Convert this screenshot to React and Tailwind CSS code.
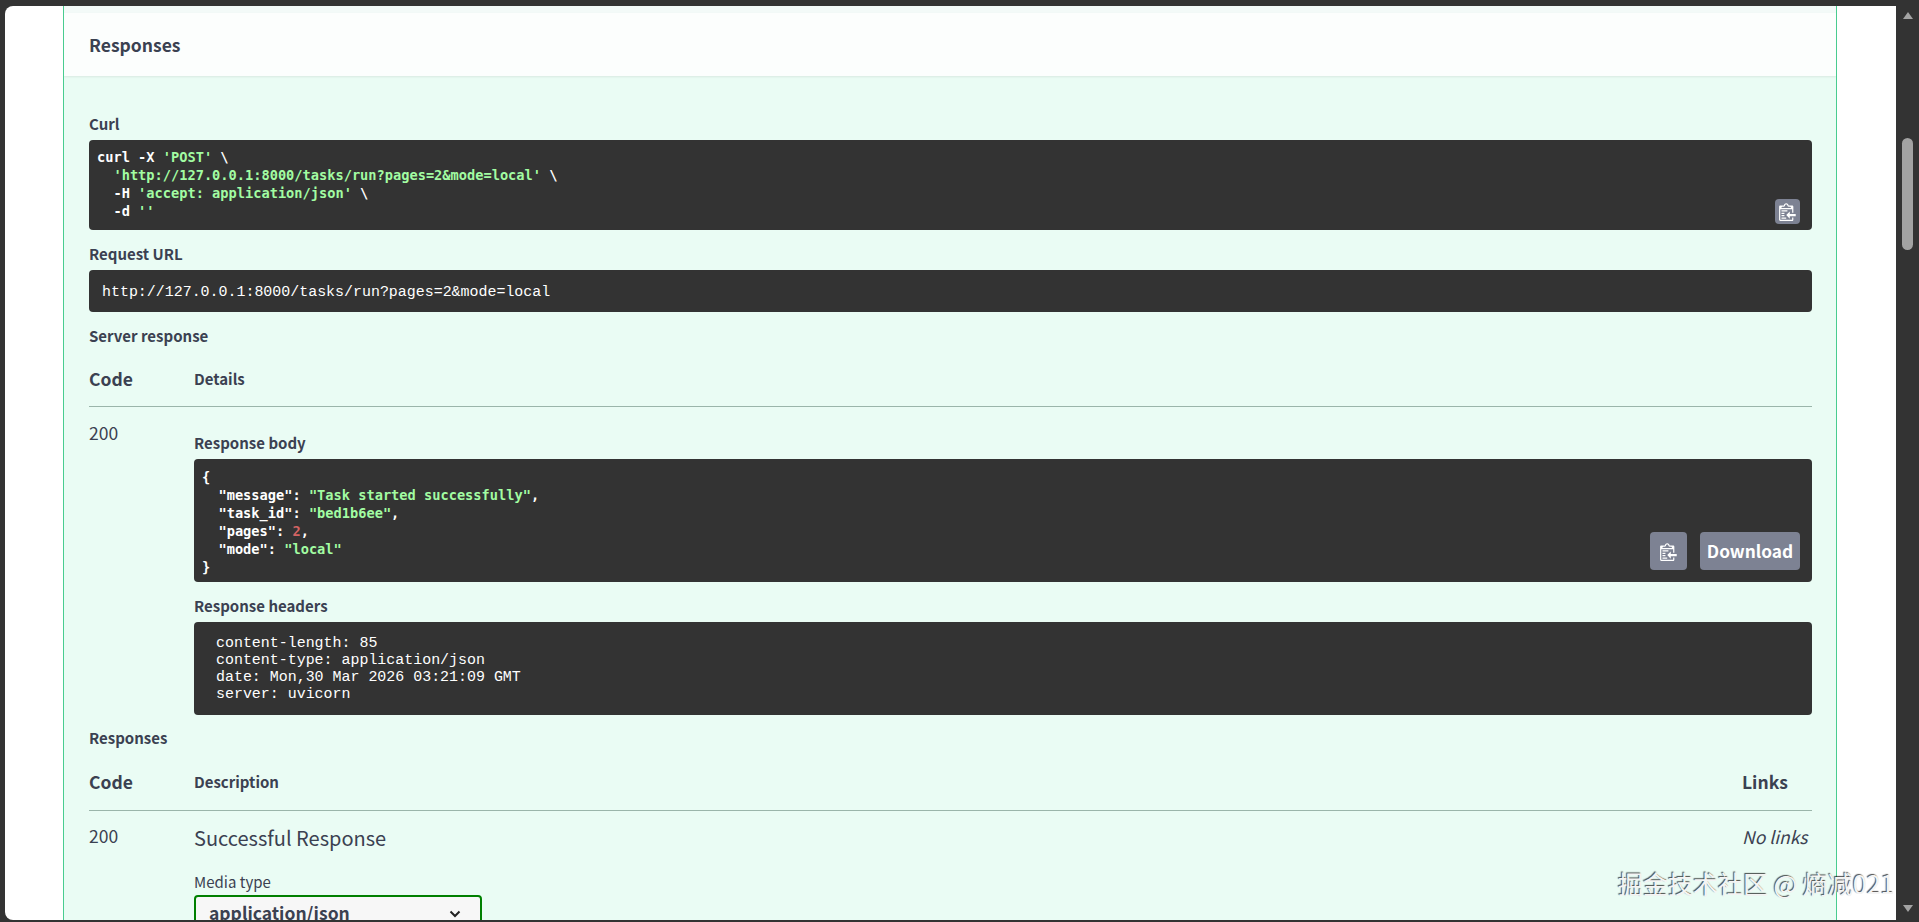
const sans = "font-['Noto_Sans_CJK_SC','Noto_Sans',sans-serif]";

function CopyIcon({ className = '' }) {
    return (
        <svg className={className} viewBox="0 0 15 16" fill="currentColor">
            <path d="M2 13h4v1H2v-1zm5-6H2v1h5V7zm2 3V8l-3 3 3 3v-2h5v-2H9zM4.5 9H2v1h2.5V9zM2 12h2.5v-1H2v1zm9 1h1v2c-.02.28-.11.52-.3.7-.19.18-.42.28-.7.3H1c-.55 0-1-.45-1-1V4c0-.55.45-1 1-1h3c0-1.11.89-2 2-2 1.11 0 2 .89 2 2h3c.55 0 1 .45 1 1v5h-1V6H1v9h10v-2zM2 5h8c0-.55-.45-1-1-1H8c-.55 0-1-.45-1-1s-.45-1-1-1-1 .45-1 1-.45 1-1 1H3c-.55 0-1 .45-1 1z" />
        </svg>
    );
}

function Label({ children, className = '' }) {
    return <div className={`h-5 text-[15px] leading-[19px] font-semibold text-[#3b4151] ${className}`}>{children}</div>;
}

function Str({ children }) {
    return <span className="text-[#a2fca2]">{children}</span>;
}

function CodeBlock({ children, className = '' }) {
    return (
        <div className={`relative rounded bg-[#333] font-['DejaVu_Sans_Mono',monospace] text-[13.67px] leading-[18px] font-bold text-white whitespace-pre ${className}`}>
            {children}
        </div>
    );
}

function PlainBlock({ children, className = '' }) {
    return (
        <div className={`rounded bg-[#333] font-['Liberation_Mono',monospace] text-[14.95px] text-white whitespace-pre ${className}`}>
            {children}
        </div>
    );
}

export default function App() {
    return (
        <div className={`relative flex h-[922px] overflow-hidden bg-[#333] ${sans}`}>
            <div className="mt-[6px] mb-[2px] ml-[5px] flex-1 overflow-hidden rounded-tl-lg rounded-bl-lg bg-white pr-[59px] pl-[58px]">
                <div className="h-full overflow-hidden border-x border-[#49cc90] bg-[#eafcf4]">
                    <div className="h-[7px] bg-[#f3faf8]" />
                    <div className="flex h-[63px] items-center bg-[#fcfefd] pt-[2px] pl-[25px] shadow-[0_1px_2px_rgba(0,0,0,0.08)]">
                        <h4 className="text-[17.5px] font-semibold text-[#3b4151]">Responses</h4>
                    </div>

                    <div className="pt-[38px] pr-[24px] pl-[25px]">
                        <Label className="mb-[6px]">Curl</Label>
                        <CodeBlock className="h-[90px] pt-2 pl-2">
                            {"curl -X "}<Str>'POST'</Str>{" \\\n  "}<Str>'http://127.0.0.1:8000/tasks/run?pages=2&mode=local'</Str>{" \\\n  -H "}<Str>'accept: application/json'</Str>{" \\\n  -d "}<Str>''</Str>
                            <button className="absolute right-3 bottom-[6px] flex h-[25px] w-[25px] items-center justify-center rounded bg-[#7d8293] text-white">
                                <CopyIcon className="h-[19px] w-[18px]" />
                            </button>
                        </CodeBlock>

                        <Label className="mt-[14px] mb-[6px]">Request URL</Label>
                        <PlainBlock className="flex h-[42px] items-center pt-[2px] pl-[13px]">http://127.0.0.1:8000/tasks/run?pages=2&mode=local</PlainBlock>

                        <Label className="mt-[14px]">Server response</Label>

                        <div className="flex h-[61px] items-center border-b border-[#9bb5aa] pt-[7px] text-[#3b4151]">
                            <div className="w-[105px] text-[17.5px] font-semibold">Code</div>
                            <div className="text-[15px] font-semibold">Details</div>
                        </div>

                        <div className="flex pt-4">
                            <div className="w-[105px] text-[17.5px] leading-5 text-[#3b4151]">200</div>
                            <div className="min-w-0 flex-1 pt-[10px]">
                                <Label className="mb-[6px]">Response body</Label>
                                <CodeBlock className="h-[123px] pt-[9px] pl-2">
                                    {"{\n  \"message\": "}<Str>"Task started successfully"</Str>{",\n  \"task_id\": "}<Str>"bed1b6ee"</Str>{",\n  \"pages\": "}<span className="text-[#d36363]">2</span>{",\n  \"mode\": "}<Str>"local"</Str>{"\n}"}
                                    <div className="absolute right-3 bottom-3 flex gap-[13px]">
                                        <button className="flex h-[38px] w-[37px] items-center justify-center rounded bg-[#7d8293] text-white">
                                            <CopyIcon className="h-[19px] w-[18px]" />
                                        </button>
                                        <button className={`h-[38px] w-[100px] rounded bg-[#7d8293] text-[17.3px] font-bold text-white ${sans}`}>Download</button>
                                    </div>
                                </CodeBlock>

                                <Label className="mt-[14px] mb-[6px]">Response headers</Label>
                                <PlainBlock className="h-[93px] pt-[13px] pl-[22px] leading-[17px]">
                                    {"content-length: 85\ncontent-type: application/json\ndate: Mon,30 Mar 2026 03:21:09 GMT\nserver: uvicorn"}
                                </PlainBlock>
                            </div>
                        </div>

                        <Label className="mt-[13px]">Responses</Label>

                        <div className="flex h-[63px] items-center border-b border-[#9bb5aa] pt-[7px] text-[#3b4151]">
                            <div className="w-[105px] text-[17.5px] font-semibold">Code</div>
                            <div className="flex-1 text-[15px] font-semibold">Description</div>
                            <div className="w-[70px] text-[17.5px] font-semibold">Links</div>
                        </div>

                        <div className="flex pt-[15px] text-[#3b4151]">
                            <div className="w-[105px] text-[17.5px] leading-5">200</div>
                            <div className="flex-1">
                                <div className="text-[20px] leading-6">Successful Response</div>
                                <div className="mt-[22px] text-[15px] leading-5">Media type</div>
                                <div className="mt-[3px] flex h-10 w-[288px] items-center justify-between rounded border-2 border-[#008000] bg-[#f7f7f7] pr-[19px] pb-[3px] pl-[13px] text-[17.5px] font-semibold">
                                    application/json
                                    <svg className="h-[12px] w-[12px] text-[#222]" viewBox="0 0 12 12" fill="none" stroke="currentColor" strokeWidth="2">
                                        <path d="M1.5 3.5 6 8l4.5-4.5" />
                                    </svg>
                                </div>
                            </div>
                            <div className="w-[70px] pt-[1px] text-[17.5px] leading-5 italic">No links</div>
                        </div>
                    </div>
                </div>
            </div>

            {/* scrollbar */}
            <div className="flex w-[23px] flex-col items-center pt-[12px]">
                <div className="h-0 w-0 border-x-[5px] border-b-[7px] border-x-transparent border-b-[#a3a3a3]" />
                <div className="mt-[119px] h-[112px] w-[11px] rounded-full bg-[#a3a3a3]" />
                <div className="mt-auto mb-[10px] h-0 w-0 border-x-[5px] border-t-[7px] border-x-transparent border-t-[#a3a3a3]" />
            </div>

            {/* watermark */}
            <div className="absolute top-[867px] left-[1618px] text-[25px] leading-8 whitespace-nowrap text-[#f4f4f4] [text-shadow:-1px_-1px_1px_rgba(0,0,0,0.7)]">
                掘金技术社区 @ 熵减021
            </div>
        </div>
    );
}
